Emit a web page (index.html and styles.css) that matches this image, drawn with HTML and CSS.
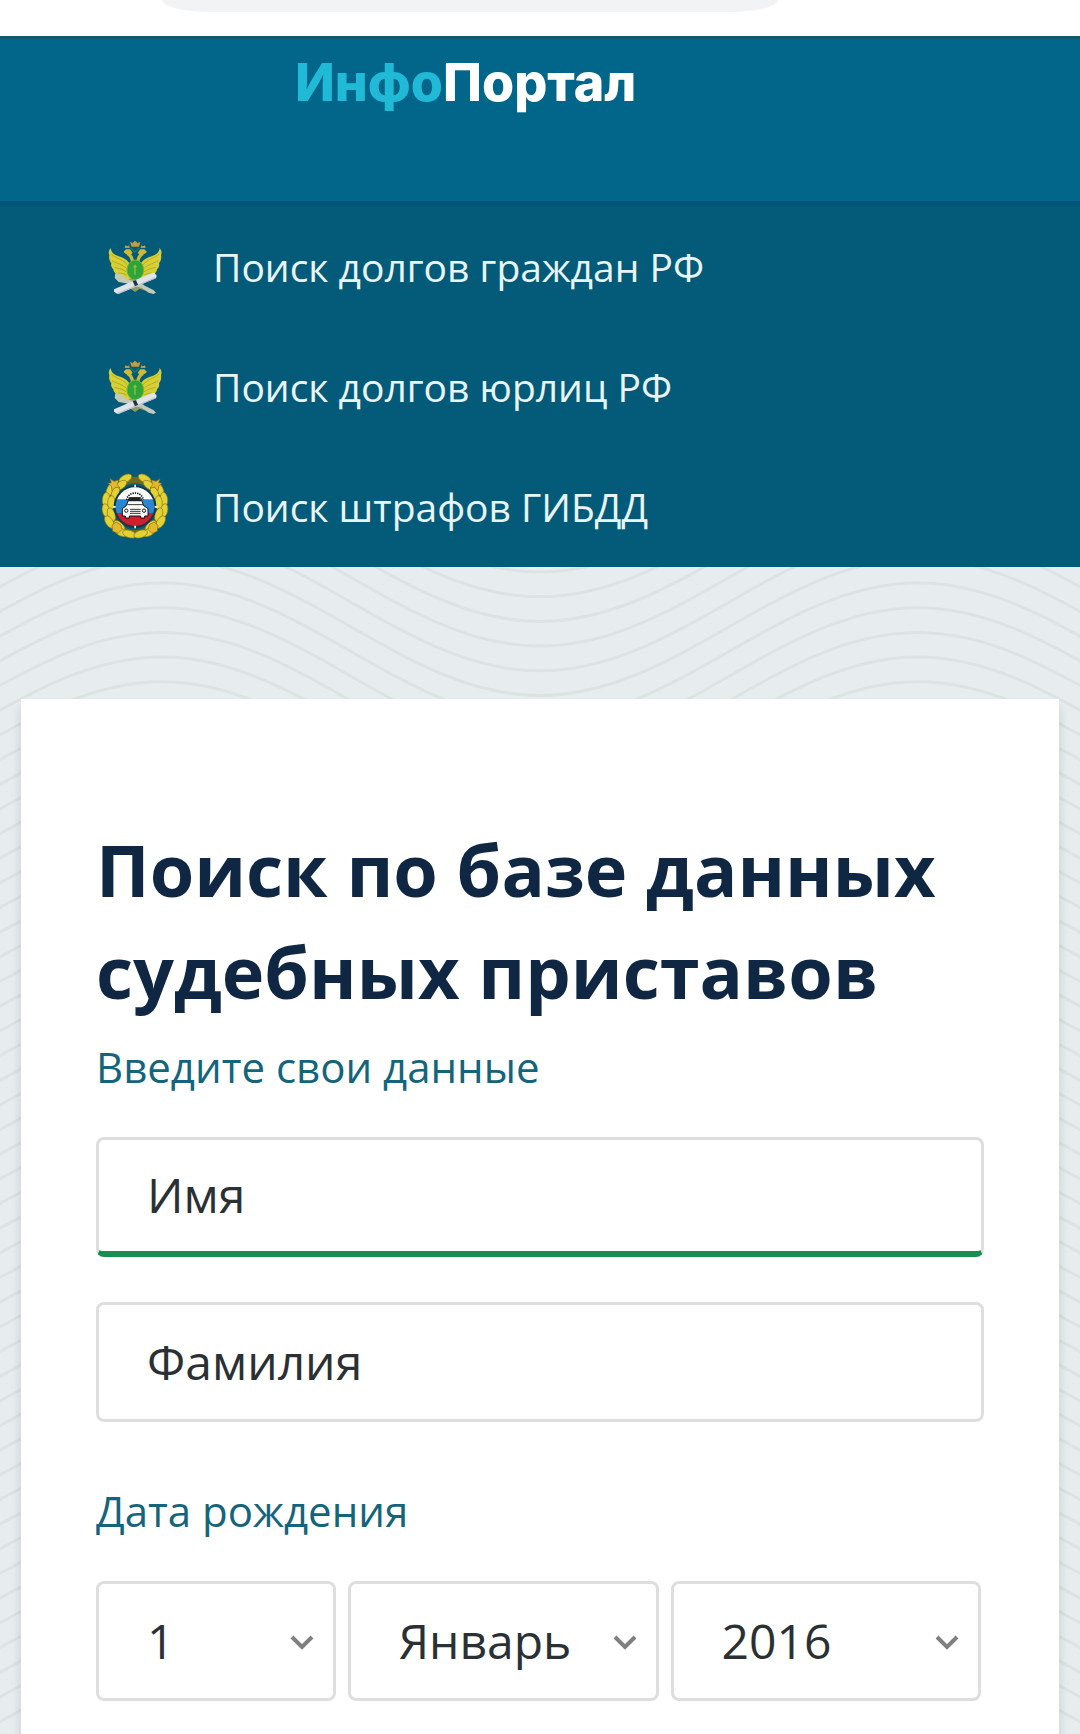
FILE: index.html
```html
<!DOCTYPE html>
<html lang="ru">
<head>
    <meta charset="UTF-8">
    <meta name="viewport" content="width=device-width, initial-scale=1.0">
    <title>ИнфоПортал</title>
    <link rel="stylesheet" href="styles.css">
</head>
<body>
<div class="topbar">
    <div class="address"></div>
</div>
<header class="header">
    <a class="logo" href="#"><span class="logo-accent">Инфо</span>Портал</a>
</header>
<nav class="menu">
    <a class="menu-item" href="#">
        <svg class="menu-icon" viewBox="0 3 300 270" aria-hidden="true">
            <g id="eagle">
                <!-- wings -->
                <g id="wing">
                    <path fill="#d8cf34" d="M62 84c2 14 10 20 22 24 18 5 32 14 38 28l4 44c-16 0-24-4-30-10-8 2-14-2-16-8-6-2-10-8-10-14-6-6-8-12-6-18-6-8-8-16-6-24-3-7-2-15 4-22z"/>
                    <path fill="none" stroke="#98a026" stroke-width="2" d="M64 102c10 12 32 14 48 32M66 122c12 8 30 10 44 24M74 142c10 2 24 6 36 14M84 160c8-2 16 0 26 6"/>
                </g>
                <use href="#wing" transform="matrix(-1 0 0 1 271 0)"/>
                <!-- heads and crowns -->
                <path fill="none" stroke="#cdbb35" stroke-width="10" d="M128 126c-2-14-6-22-16-26M143 126c2-14 6-22 16-26"/>
                <path fill="#cdbb35" d="M100 96l8-8 12 0 8 10-8 8-12-4zM171 96l-8-8-12 0-8 10 8 8 12-4z"/>
                <path fill="#c79a3c" d="M104 84l2-8 6 3 5-3 2 8zM167 84l-2-8-6 3-5-3-2 8zM120 66l8 3 7-7 8 7 8-3-4 14h-22z"/>
                <path fill="none" stroke="#1e7a5a" stroke-width="4" d="M122 84l13 12 13-12"/>
                <!-- tail and paws -->
                <path fill="#8f9b6a" d="M118 176l-12 34 16-4 13 10 14-10 18 6-14-38z"/>
                <path fill="#c3cabb" d="M76 160l16 2 12 12 50 18 36 18 8 8-8 4-14-4-20-14-48-14-22-4-12-12z"/>
                <ellipse cx="136" cy="150" rx="25" ry="30" fill="#2fa43a"/>
                <ellipse cx="136" cy="150" rx="25" ry="30" fill="none" stroke="#7cb52d" stroke-width="3"/>
                <path stroke="#8fc03c" stroke-width="4" d="M135 134v30M130 140h10"/>
                <!-- scroll -->
                <path fill="#dfe3ea" d="M72 208l114-49 8 0 6 8-2 8-112 47-8-2-6-6z"/>
                <path fill="none" stroke="#9aa4b4" stroke-width="2" d="M84 220l112-46"/>
                <path fill="#26343d" d="M128 184l10-4 6 14-9 5z"/>
            </g>
        </svg>
        <span>Поиск долгов граждан РФ</span>
    </a>
    <a class="menu-item" href="#">
        <svg class="menu-icon" viewBox="0 3 300 270" aria-hidden="true">
            <use href="#eagle"/>
        </svg>
        <span>Поиск долгов юрлиц РФ</span>
    </a>
    <a class="menu-item" href="#">
        <svg class="menu-icon" viewBox="0 3 300 270" aria-hidden="true">
            <defs>
                <clipPath id="disc"><circle cx="135" cy="140" r="58"/></clipPath>
                <ellipse id="leaf" rx="11" ry="21" fill="#e3d235" stroke="#8a7a1c" stroke-width="2"/>
            </defs>
            <circle cx="135" cy="140" r="80" fill="none" stroke="#6f6a20" stroke-width="20"/>
            <!-- wreath -->
            <g id="half-wreath">
                <use href="#leaf" transform="translate(106 56) rotate(62)"/>
                <use href="#leaf" transform="translate(92 76) rotate(55)"/>
                <use href="#leaf" transform="translate(62 88) rotate(28)"/>
                <use href="#leaf" transform="translate(76 100) rotate(22)"/>
                <use href="#leaf" transform="translate(48 118) rotate(6)"/>
                <use href="#leaf" transform="translate(64 128) rotate(4)"/>
                <use href="#leaf" transform="translate(48 152) rotate(-12)"/>
                <use href="#leaf" transform="translate(64 164) rotate(-18)"/>
                <use href="#leaf" transform="translate(58 186) rotate(-32)"/>
                <use href="#leaf" transform="translate(88 198) rotate(-45)"/>
                <use href="#leaf" transform="translate(92 216) rotate(-60)"/>
                <use href="#leaf" transform="translate(118 222) rotate(-72)"/>
                <path fill="#e0b92c" stroke="#8a6a1c" stroke-width="2" d="M60 56l12 8 14-4-4 14 8 10-14-2-10 10-2-14-10-8 10-2zM66 196l12-10 14 8 4 14-12 12-16-6z"/>
            </g>
            <use href="#half-wreath" transform="matrix(-1 0 0 1 270 0)"/>
            <circle cx="135" cy="140" r="64" fill="#14384a"/>
            <g clip-path="url(#disc)">
                <path fill="#fff" d="M70 80h130v40H70z"/>
                <path fill="#2a86cf" d="M70 118h130v42H70z"/>
                <path fill="#cf1f2c" d="M70 160h130v42H70z"/>
            </g>
            <!-- car -->
            <path fill="none" stroke="#111" stroke-width="5" stroke-dasharray="4 3" d="M110 120c4-28 46-28 50 0"/>
            <path fill="#fff" stroke="#111" stroke-width="3" d="M97 168v-22l12-9 9-24h34l9 24 13 9v22h-10v6h-12v-6h-34v6h-12v-6z"/>
            <path fill="#222" d="M118 114h32l5 10h-42z"/>
            <path fill="none" stroke="#333" stroke-width="3" d="M112 134h47M120 148h32M120 154h32M120 160h32"/>
            <circle cx="109" cy="152" r="5" fill="#fff" stroke="#111" stroke-width="3"/>
            <circle cx="162" cy="152" r="5" fill="#fff" stroke="#111" stroke-width="3"/>
            <path fill="#fff" d="M133 74h5v8h-5zM133 197h5v8h-5zM69 138h8v5h-8zM194 138h8v5h-8z"/>
        </svg>
        <span>Поиск штрафов ГИБДД</span>
    </a>
</nav>
<main class="content">
    <svg class="waves" aria-hidden="true">
        <defs>
            <path id="wave" d="M-216 153C-78 153 24 16 162 16S402 153 540 153S780 16 918 16"/>
            <pattern id="wave-lines" width="756" height="74" patternUnits="userSpaceOnUse">
                <g fill="none" stroke="#dde2e2" stroke-width="3">
                    <use href="#wave" y="-148"/>
                    <use href="#wave" y="-123.3"/>
                    <use href="#wave" y="-98.6"/>
                    <use href="#wave" y="-74"/>
                    <use href="#wave" y="-49.3"/>
                    <use href="#wave" y="-24.6"/>
                    <use href="#wave" y="0"/>
                    <use href="#wave" y="24.7"/>
                    <use href="#wave" y="49.4"/>
                </g>
            </pattern>
        </defs>
        <rect width="100%" height="100%" fill="url(#wave-lines)"/>
    </svg>
    <form class="card">
        <h1>Поиск по базе данных судебных приставов</h1>
        <p class="label">Введите свои данные</p>
        <input class="field field-active" type="text" name="name" placeholder="Имя" aria-label="Имя">
        <input class="field" type="text" name="surname" placeholder="Фамилия" aria-label="Фамилия">
        <label class="label label-date" for="day">Дата рождения</label>
        <div class="date">
            <div class="select">
                <select class="field" id="day" name="day">
                    <option>1</option>
                    <option>2</option>
                    <option>3</option>
                </select>
                <svg class="arrow" viewBox="0 0 24 16" aria-hidden="true"><path d="M2 2l10 10L22 2"/></svg>
            </div>
            <div class="select">
                <select class="field" name="month" aria-label="Месяц">
                    <option>Январь</option>
                    <option>Февраль</option>
                    <option>Март</option>
                </select>
                <svg class="arrow" viewBox="0 0 24 16" aria-hidden="true"><path d="M2 2l10 10L22 2"/></svg>
            </div>
            <div class="select">
                <select class="field" name="year" aria-label="Год">
                    <option>2016</option>
                    <option>2015</option>
                    <option>2014</option>
                </select>
                <svg class="arrow" viewBox="0 0 24 16" aria-hidden="true"><path d="M2 2l10 10L22 2"/></svg>
            </div>
        </div>
    </form>
</main>
</body>
</html>
```
FILE: styles.css
```css
* {
    box-sizing: border-box;
}

body {
    margin: 0;
    min-height: 100vh;
    display: flex;
    flex-direction: column;
    font-family: "Open Sans", "Noto Sans", sans-serif;
    background-color: #e7edef;
}

.topbar {
    height: 36px;
    padding: 0 28% 0 15%;
    background-color: #fff;
}

.address {
    height: 12px;
    background-color: #f1f3f5;
    border-radius: 0 0 48px 48px / 0 0 12px 12px;
}

.header {
    height: 165px;
    padding: 14px 0 0 295px;
    background-color: #02668a;
    border-top: 3px solid #14586b;
}

.logo {
    font-family: Inter, sans-serif;
    font-size: 52px;
    font-weight: 800;
    line-height: 60px;
    color: #fff;
    text-decoration: none;
}

.logo-accent {
    color: #20b9d6;
}

.menu {
    background-color: #045a79;
    border-top: 6px solid #005579;
}

.menu-item {
    display: flex;
    align-items: center;
    gap: 23px;
    height: 120px;
    padding: 0 0 2px 90px;
    font-size: 39px;
    color: #e8f5f6;
    text-decoration: none;
}

.menu-icon {
    width: 100px;
    height: 90px;
}

.content {
    position: relative;
    flex: 1;
    display: flex;
    padding: 132px 21px 0;
}

.waves {
    position: absolute;
    top: 0;
    left: 0;
    width: 100%;
    height: 100%;
}

.card {
    position: relative;
    flex: 1;
    padding: 119px 75px 32px;
    background-color: #fff;
    box-shadow: 0 8px 10px rgba(0, 0, 0, 0.14);
}

h1 {
    margin: 0 0 15px;
    font-size: 72px;
    line-height: 102px;
    color: #0f2742;
}

.label {
    display: block;
    margin: 0 0 40px;
    font-size: 42px;
    line-height: 60px;
    color: #14647c;
}

.label-date {
    margin-top: 59px;
}

.field {
    display: block;
    width: 100%;
    height: 120px;
    padding: 0 48px 2px;
    font-family: inherit;
    font-size: 48px;
    color: #2a3034;
    background-color: #fff;
    border: 3px solid #dedede;
    border-radius: 8px;
    outline: none;
    appearance: none;
}

.field::placeholder {
    color: #2a3034;
    opacity: 1;
}

.field-active {
    margin-bottom: 45px;
    border-bottom: 6px solid #188f51;
}

.date {
    display: grid;
    grid-template-columns: 27% 35% 35%;
    gap: 12px;
}

.select {
    position: relative;
}

.arrow {
    position: absolute;
    right: 22px;
    top: 54px;
    width: 24px;
    height: 16px;
    fill: none;
    stroke: #808080;
    stroke-width: 4;
    pointer-events: none;
}
```
